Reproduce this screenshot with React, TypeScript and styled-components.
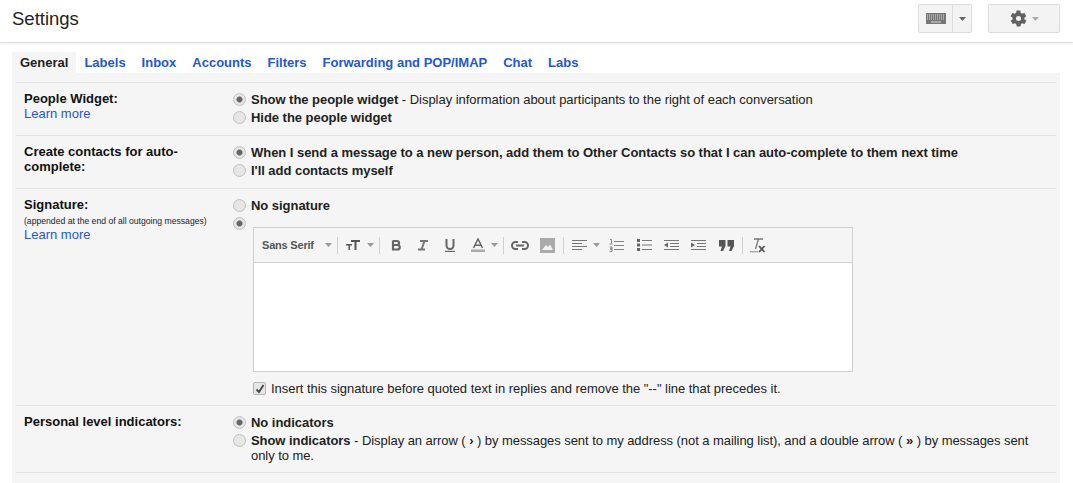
import styled, { createGlobalStyle } from 'styled-components'

const GlobalStyle = createGlobalStyle`
  html, body {
    margin: 0;
    padding: 0;
    height: 483px;
    overflow: hidden;
    background: #fff;
    font-family: "Liberation Sans", Arial, sans-serif;
    font-size: 13px;
    color: #222;
  }
`

const tabs = ['General', 'Labels', 'Inbox', 'Accounts', 'Filters', 'Forwarding and POP/IMAP', 'Chat', 'Labs']

const Caret = ({ color = '#666' }: { color?: string }) => (
  <svg width="7" height="4" viewBox="0 0 7 4"><path d="M0 0h7L3.5 4z" fill={color} /></svg>
)

const App: React.FC = () => {
  return (
    <>
      <GlobalStyle />
      <Header>
        <Title>Settings</Title>
        <InputGroup>
          <KeyboardPart>
            <svg width="20" height="11" viewBox="0 0 20 11">
              <rect width="20" height="11" fill="#777" />
              <path d="M1 2h18M1 4h18M1 6h18" stroke="#ddd" strokeWidth="1" strokeDasharray="1 1" />
              <path d="M5 9h10" stroke="#ddd" />
            </svg>
          </KeyboardPart>
          <CaretPart><Caret /></CaretPart>
        </InputGroup>
        <GearButton>
          <svg width="19" height="19" viewBox="0 0 24 24">
            <path fill="#616161" fillRule="evenodd" d="M19.4 13c.1-.3.1-.7.1-1s0-.7-.1-1l2.1-1.6c.2-.2.2-.4.1-.6l-2-3.5c-.1-.2-.4-.3-.6-.2l-2.5 1c-.5-.4-1.100-.7-1.700-1l-.4-2.600c0-.3-.2-.5-.5-.5h-4c-.3 0-.5.200-.5.500l-.4 2.600c-.6.300-1.200.600-1.700 1l-2.500-1c-.2-.100-.5 0-.6.200l-2 3.500c-.1.200-.1.400.1.600L4.600 11c-.1.300-.1.700-.1 1s0 .7.100 1l-2.100 1.600c-.2.200-.2.400-.1.600l2 3.500c.1.200.4.300.6.200l2.500-1c.5.400 1.100.700 1.700 1l.4 2.600c0 .3.200.5.500.5h4c.3 0 .5-.2.500-.5l.4-2.600c.6-.3 1.200-.6 1.700-1l2.500 1c.2.100.5 0 .6-.2l2-3.500c.1-.2.100-.4-.1-.6zM12 15.200a3.200 3.200 0 1 1 0-6.400 3.200 3.200 0 0 1 0 6.400z" />
          </svg>
          <Caret color="#aaa" />
        </GearButton>
      </Header>
      <Panel>
        <TabBar>
          {tabs.map((t, i) => (
            <Tab key={t} $active={i === 0}>{t}</Tab>
          ))}
        </TabBar>
        <Rows>
          <Row>
            <LabelCell>
              <LabelText>People Widget:</LabelText>
              <LearnMore>Learn more</LearnMore>
            </LabelCell>
            <OptionCell>
              <Option>
                <Radio $checked />
                <span><b>Show the people widget</b> - Display information about participants to the right of each conversation</span>
              </Option>
              <Option>
                <Radio />
                <b>Hide the people widget</b>
              </Option>
            </OptionCell>
          </Row>
          <Row>
            <LabelCell>
              <LabelText>Create contacts for auto-complete:</LabelText>
            </LabelCell>
            <OptionCell>
              <Option>
                <Radio $checked />
                <b>When I send a message to a new person, add them to Other Contacts so that I can auto-complete to them next time</b>
              </Option>
              <Option>
                <Radio />
                <b>I'll add contacts myself</b>
              </Option>
            </OptionCell>
          </Row>
          <Row>
            <LabelCell>
              <LabelText>Signature:</LabelText>
              <Hint>(appended at the end of all outgoing messages)</Hint>
              <LearnMore>Learn more</LearnMore>
            </LabelCell>
            <OptionCell>
              <Option>
                <Radio />
                <b>No signature</b>
              </Option>
              <Option>
                <Radio $checked />
              </Option>
              <Editor>
                <Toolbar>
                  <FontName>Sans Serif</FontName>
                  <SmallCaret><Caret color="#999" /></SmallCaret>
                  <Divider />
                  <ToolIcon>
                    <svg width="15" height="12" viewBox="0 0 15 12" fill="#555">
                      <path d="M5 1h9v2h-3.500v8H8.500V3H5zM0 5h6v1.500H4v4.500H2.500V6.500H0z" />
                    </svg>
                  </ToolIcon>
                  <SmallCaret><Caret color="#999" /></SmallCaret>
                  <Divider />
                  <ToolIcon>
                    <svg width="12" height="12" viewBox="0 0 12 12" fill="none" stroke="#666" strokeWidth="2.200">
                      <path d="M3 1.500v9M3 2h4a2 2 0 0 1 0 4H3h4.500a2.250 2.250 0 0 1 0 4.500H2" />
                    </svg>
                  </ToolIcon>
                  <ToolIcon>
                    <svg width="12" height="12" viewBox="0 0 12 12" fill="none" stroke="#777" strokeWidth="2">
                      <path d="M3 2h8M1 10.500h7M7.500 2 4.500 10.500" />
                    </svg>
                  </ToolIcon>
                  <ToolIcon>
                    <svg width="12" height="13" viewBox="0 0 12 13" fill="none" stroke="#666">
                      <path strokeWidth="2" d="M2.500 0v6.500a3.500 3.500 0 0 0 7 0V0" />
                      <path strokeWidth="1.200" d="M1 12.400h10" />
                    </svg>
                  </ToolIcon>
                  <ToolIcon>
                    <svg width="14" height="14" viewBox="0 0 14 14">
                      <path fill="none" stroke="#666" strokeWidth="1.500" d="M2.500 10 7 1l4.500 9M4 7.200h6" />
                      <rect x="0" y="11.500" width="14" height="2.500" fill="#aaa" />
                    </svg>
                  </ToolIcon>
                  <SmallCaret><Caret color="#999" /></SmallCaret>
                  <Divider />
                  <ToolIcon>
                    <svg width="18" height="9" viewBox="0 0 18 9" fill="none" stroke="#666" strokeWidth="2">
                      <path d="M7 1H4.500a3.500 3.500 0 0 0 0 7H7M11 1h2.500a3.500 3.500 0 0 1 0 7H11M5 4.500h8" />
                    </svg>
                  </ToolIcon>
                  <ToolIcon>
                    <svg width="15" height="15" viewBox="0 0 15 15">
                      <rect width="15" height="15" fill="#aaa" />
                      <path d="M2 12 6 7l2 2 2-2.500 3 5.500z" fill="#f5f5f5" />
                    </svg>
                  </ToolIcon>
                  <Divider />
                  <ToolIcon>
                    <svg width="15" height="11" viewBox="0 0 15 11" stroke="#777">
                      <path d="M0 .500h15M0 3.500h10M0 6.500h15M0 9.500h10" />
                    </svg>
                  </ToolIcon>
                  <SmallCaret><Caret color="#999" /></SmallCaret>
                  <ToolIcon>
                    <svg width="15" height="13" viewBox="0 0 15 13" stroke="#777" fill="none">
                      <path d="M5 2.500h10M5 6.500h10M5 10.500h10M1 .5h1.500v4M.5 5h3M.5 8h2.500v2H1M1 10h2v2.500H.5" strokeWidth=".9" />
                    </svg>
                  </ToolIcon>
                  <ToolIcon>
                    <svg width="15" height="12" viewBox="0 0 15 12">
                      <path d="M5 1.500h10M5 6h10M5 10.500h10" stroke="#777" />
                      <path d="M0 0h3v3H0zM0 4.500h3v3H0zM0 9h3v3H0z" fill="#666" />
                    </svg>
                  </ToolIcon>
                  <ToolIcon>
                    <svg width="15" height="11" viewBox="0 0 15 11">
                      <path d="M0 .500h15M6 3.500h9M6 6.500h9M0 9.500h15" stroke="#777" />
                      <path d="M4 2.500v5L0 5z" fill="#666" />
                    </svg>
                  </ToolIcon>
                  <ToolIcon>
                    <svg width="15" height="11" viewBox="0 0 15 11">
                      <path d="M0 .500h15M6 3.500h9M6 6.500h9M0 9.500h15" stroke="#777" />
                      <path d="M0 2.500v5L4 5z" fill="#666" />
                    </svg>
                  </ToolIcon>
                  <ToolIcon>
                    <svg width="15" height="11" viewBox="0 0 15 11" fill="#555">
                      <path d="M0 0h6.500v6L4 11H1.500L3 6.500H0zM8.500 0H15v6l-2.500 5H10l1.500-4.500h-3z" />
                    </svg>
                  </ToolIcon>
                  <Divider />
                  <ToolIcon>
                    <svg width="16" height="15" viewBox="0 0 16 15">
                      <path d="M4 1h9M8.500 1 5.500 11" stroke="#777" strokeWidth="1.300" fill="none" />
                      <path d="M0 13.800h8" stroke="#888" />
                      <path d="m9 8 5.500 6M14.500 8 9 14" stroke="#555" strokeWidth="1.800" />
                    </svg>
                  </ToolIcon>
                </Toolbar>
                <EditorBody />
              </Editor>
              <CheckOption>
                <Checkbox>
                  <svg width="10" height="10" viewBox="0 0 10 10" fill="none" stroke="#444" strokeWidth="1.800">
                    <path d="M1.500 5.500 4 8l4.500-7" />
                  </svg>
                </Checkbox>
                <span>Insert this signature before quoted text in replies and remove the "--" line that precedes it.</span>
              </CheckOption>
            </OptionCell>
          </Row>
          <Row>
            <LabelCell>
              <LabelText>Personal level indicators:</LabelText>
            </LabelCell>
            <OptionCell>
              <Option>
                <Radio $checked />
                <b>No indicators</b>
              </Option>
              <Option>
                <Radio />
                <TightText><b>Show indicators</b> - Display an arrow ( <b>›</b> ) by messages sent to my address (not a mailing list), and a double arrow ( <b>»</b> ) by messages sent only to me.</TightText>
              </Option>
            </OptionCell>
          </Row>
        </Rows>
      </Panel>
    </>
  )
}

export default App

const Header = styled.header`
  height: 43px;
  box-sizing: border-box;
  padding: 4px 13px 0 12px;
  display: flex;
  align-items: flex-start;
  border-bottom: 1px solid #e3e3e3;
  box-shadow: 0 1px 2px rgba(0, 0, 0, 0.08);
`
const Title = styled.h1`
  margin: 0;
  flex: 1;
  font-size: 18.5px;
  font-weight: normal;
  line-height: 30px;
  color: #222;
`
const InputGroup = styled.div`
  display: flex;
  height: 29px;
  margin-right: 16px;
  border: 1px solid #dcdcdc;
  border-radius: 2px;
  background: #f3f3f3;
  box-sizing: border-box;
`
const KeyboardPart = styled.div`
  width: 33px;
  display: flex;
  align-items: center;
  justify-content: center;
  border-right: 1px solid #dcdcdc;
`
const CaretPart = styled.div`
  width: 18px;
  display: flex;
  align-items: center;
  justify-content: center;
`
const GearButton = styled.div`
  width: 72px;
  height: 29px;
  box-sizing: border-box;
  display: flex;
  align-items: center;
  justify-content: center;
  gap: 4px;
  border: 1px solid #dcdcdc;
  border-radius: 2px;
  background: #f3f3f3;
`
const Panel = styled.main`
  margin: 9px 13px 0 12px;
  background: #f5f5f5;
  height: 431px;
`
const TabBar = styled.nav`
  display: flex;
  height: 21px;
  background: #fff;
`
const Tab = styled.a<{ $active?: boolean }>`
  padding: 0 8px;
  line-height: 21px;
  font-weight: bold;
  color: ${(p) => (p.$active ? '#222' : '#2557cf')};
  background: ${(p) => (p.$active ? '#f5f5f5' : 'transparent')};
`
const Rows = styled.div`
  padding: 9px 4px 0;
`
const Row = styled.section`
  display: grid;
  grid-template-columns: 209px 1fr;
  padding: 9px 8px 7px 8px;
  border-top: 1px solid #e2e2e2;

  &:last-child {
    border-bottom: 1px solid #e2e2e2;
    padding-bottom: 6px;
  }
`
const LabelCell = styled.div`
  display: flex;
  flex-direction: column;
  padding-right: 32px;
  margin-top: -1px;
`
const LabelText = styled.div`
  font-weight: bold;
  line-height: 15px;
  color: #111;
`
const Hint = styled.div`
  font-size: 8.65px;
  line-height: 12px;
  margin-top: 3px;
  white-space: nowrap;
`
const LearnMore = styled.a`
  color: #2557cf;
  line-height: 15px;
`
const OptionCell = styled.div`
  display: flex;
  flex-direction: column;
  letter-spacing: -0.035px;
`
const Option = styled.label`
  display: flex;
  gap: 5px;
  line-height: 15px;
  margin-bottom: 3px;
  padding-right: 16px;
  align-items: flex-start;
`
const TightText = styled.span`
  letter-spacing: -0.06px;
`
const Radio = styled.span<{ $checked?: boolean }>`
  flex: none;
  width: 13px;
  height: 13px;
  margin-top: 1px;
  box-sizing: border-box;
  border-radius: 50%;
  border: 1px solid #c0c0c0;
  background: ${(p) =>
    p.$checked
      ? 'radial-gradient(circle, #666 0 2.500px, #e6e6e6 3.500px)'
      : '#e6e6e6'};
`
const Editor = styled.div`
  width: 600px;
  box-sizing: border-box;
  margin: -6px 0 0 20px;
  border: 1px solid #cfcfcf;
  background: #fff;
`
const Toolbar = styled.div`
  height: 35px;
  box-sizing: border-box;
  display: flex;
  align-items: center;
  padding-left: 8px;
  background: #f5f5f5;
  border-bottom: 1px solid #cfcfcf;
`
const FontName = styled.span`
  font-size: 11px;
  font-weight: bold;
  letter-spacing: -0.2px;
  color: #555;
  margin-right: 11px;
`
const Divider = styled.span`
  width: 1px;
  height: 17px;
  background: #cfcfcf;
  margin: 0 2px;
`
const ToolIcon = styled.span`
  display: flex;
  flex: none;
  align-items: center;
  justify-content: center;
  width: 27.3px;
`
const SmallCaret = styled.span`
  display: flex;
  margin-right: 3px;
`
const EditorBody = styled.div`
  height: 108px;
`
const CheckOption = styled.label`
  display: flex;
  gap: 5px;
  margin: 9px 0 2px 20px;
  line-height: 15px;
  align-items: center;
`
const Checkbox = styled.span`
  width: 13px;
  height: 13px;
  box-sizing: border-box;
  border: 1px solid #b5b5b5;
  border-radius: 2px;
  background: #e6e6e6;
  display: flex;
  align-items: center;
  justify-content: center;
`
